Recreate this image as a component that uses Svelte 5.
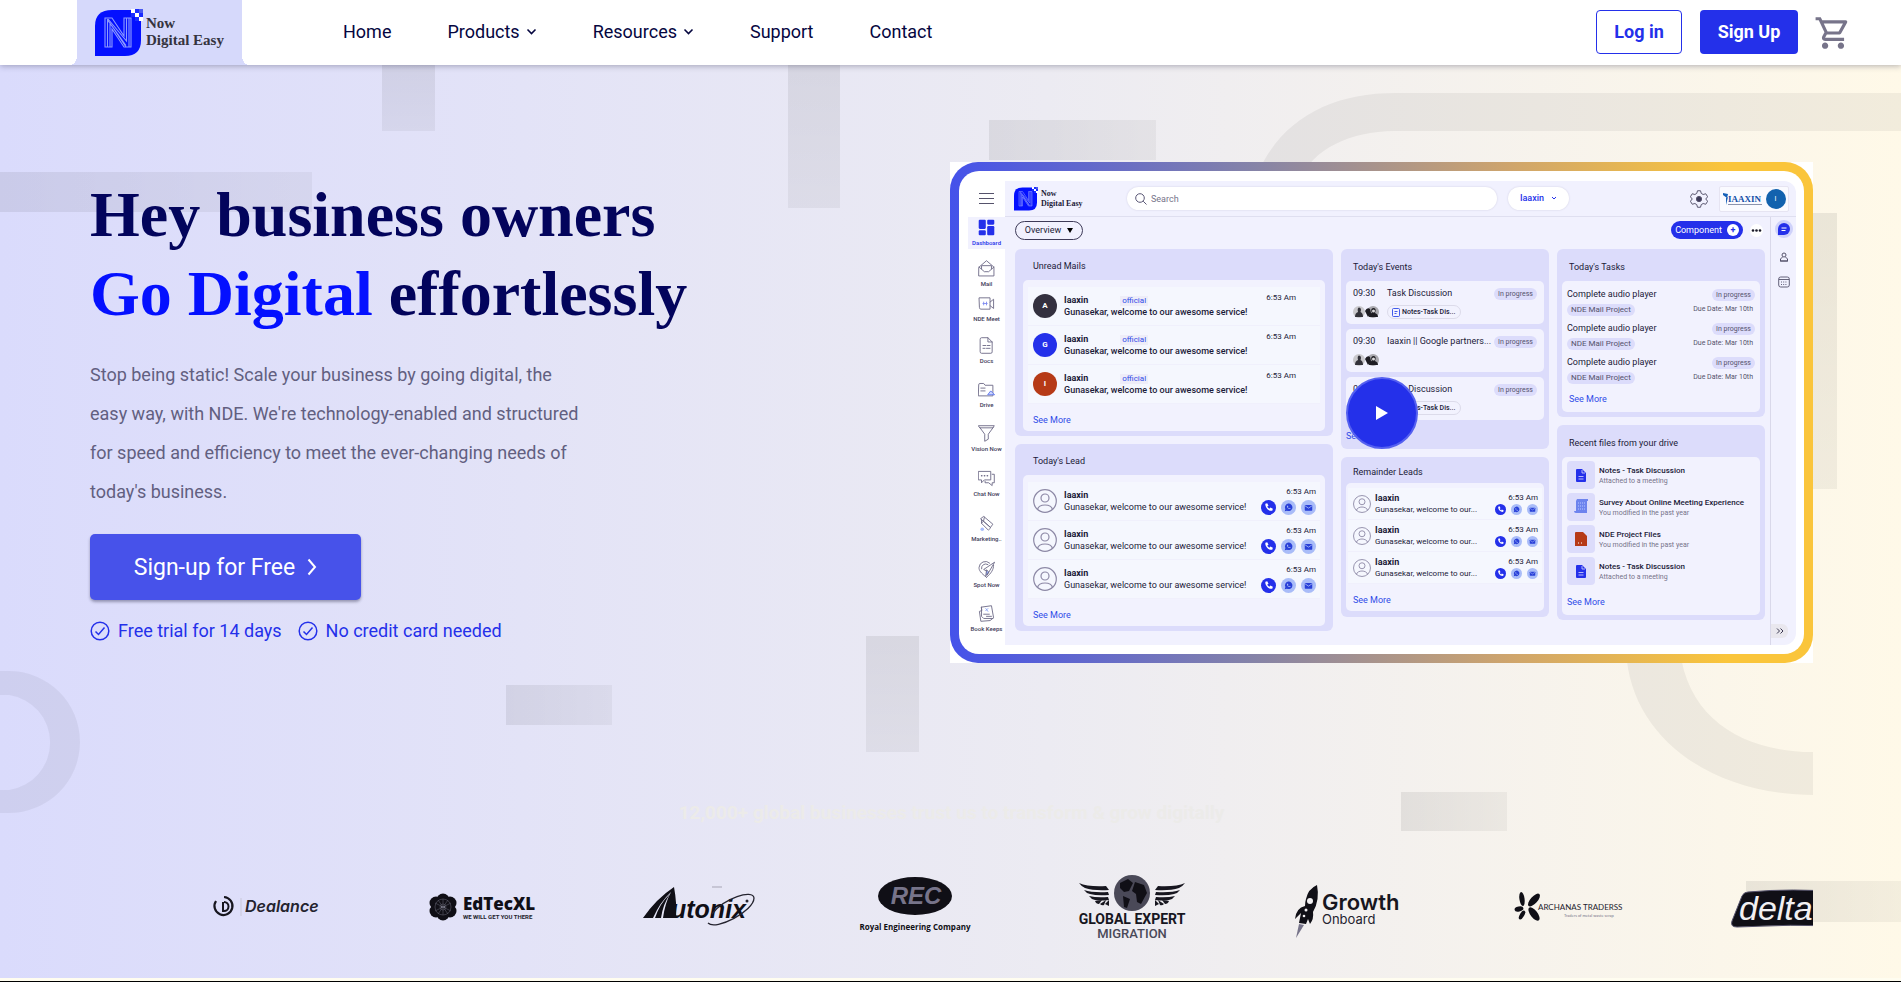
<script>
  const menu = [
    { label: 'Home' },
    { label: 'Products', drop: true },
    { label: 'Resources', drop: true },
    { label: 'Support' },
    { label: 'Contact' }
  ];
  const side = [
    { label: 'Dashboard', icon: 'dash', h: 32 },
    { label: 'Mail', icon: 'mail', h: 41 },
    { label: 'NDE Meet', icon: 'meet', h: 35 },
    { label: 'Docs', icon: 'docs', h: 42 },
    { label: 'Drive', icon: 'drive', h: 44 },
    { label: 'Vision Now', icon: 'funnel', h: 44 },
    { label: 'Chat Now', icon: 'chat', h: 45 },
    { label: 'Marketing..', icon: 'market', h: 45 },
    { label: 'Spot Now', icon: 'spot', h: 46 },
    { label: 'Book Keeps', icon: 'book', h: 44 }
  ];
  const mails = [
    { letter: 'A', color: '#33303f' },
    { letter: 'G', color: '#2430ea' },
    { letter: 'I', color: '#b63a17' }
  ];
  const events = [
    { title: 'Task Discussion', note: true },
    { title: 'Iaaxin || Google partners...', note: false },
    { title: 'Task Discussion', note: true }
  ];
  const files = [
    { name: 'Notes - Task Discussion', info: 'Attached to a meeting', kind: 'doc' },
    { name: 'Survey About Online Meeting Experience', info: 'You modified in the past year', kind: 'survey' },
    { name: 'NDE Project Files', info: 'You modified in the past year', kind: 'pdf' },
    { name: 'Notes - Task Discussion', info: 'Attached to a meeting', kind: 'doc' }
  ];
  const three = [0, 1, 2];
</script>

{#snippet brandMark(size)}
  <svg width={size} height={size} viewBox="0 0 48 48" aria-hidden="true">
    <path d="M0 47V17Q0 1 17 1H46V31Q46 47 30 47Z" fill="#0410ff" />
    <g fill="none" stroke="#8f9bff" stroke-width="1.1">
      <path d="M10 38V9H17L29 27V9H36V38H29L17 20V38Z" />
      <path d="M12.500 38V11L31 36.500M15 38V15M31.500 9V32L13 10M34 9V38M17 17L31 38" />
    </g>
    <path d="M36 0h4v4h-4zM40 4h4v4h-4zM44 8h4v4h-4z" fill="#fff" />
    <path d="M40 0h4v4h-4zM44 4h4v4h-4zM36 4h4v4h-4zM40 8h4v4h-4z" fill="#1a2cff" />
    <path d="M44 0h4v4h-4z" fill="#4a5af0" />
  </svg>
{/snippet}

{#snippet person(size)}
  <svg width={size} height={size} viewBox="0 0 24 24" fill="none" stroke="#8d89a6" stroke-width="1.200" aria-hidden="true">
    <circle cx="12" cy="12" r="11.300" /><circle cx="12" cy="9" r="4" /><path d="M4.500 20.500C6 14.500 18 14.500 19.500 20.500" />
  </svg>
{/snippet}

{#snippet contactIcons(size)}
  <span class="contacts" class:tight={size < 12}>
    <svg width={size} height={size} viewBox="0 0 24 24" aria-hidden="true">
      <circle cx="12" cy="12" r="12" fill="#2430ea" />
      <path d="M7 6l3-1 2 4-2 1.500c.8 1.800 1.800 2.800 3.500 3.500L15 12l4 2-1 3c-5 2-12-5-11-11z" fill="#fff" />
    </svg>
    <svg width={size} height={size} viewBox="0 0 24 24" aria-hidden="true">
      <circle cx="12" cy="12" r="12" fill="#a9bcf8" />
      <path d="M6 18l1-3.500a6 6 0 1 1 2.500 2.500z" fill="#2940d8" />
      <path d="M9.500 9l1.500 0 .7 1.500-.7 1c.6 1 1.200 1.500 2 1.900l1-.7 1.500.9c-1 2.500-6.500-.500-6-4.600z" fill="#a9bcf8" />
    </svg>
    <svg width={size} height={size} viewBox="0 0 24 24" aria-hidden="true">
      <circle cx="12" cy="12" r="12" fill="#a9bcf8" />
      <rect x="6" y="8" width="12" height="9" rx="1" fill="#2940d8" /><path d="M6 9l6 4 6-4" stroke="#a9bcf8" fill="none" stroke-width="1.300" />
    </svg>
  </span>
{/snippet}

{#snippet sideIcon(kind)}
  <svg width="17" height="17" viewBox="0 0 24 24" fill="none" stroke="#6f6c88" stroke-width="1.300" stroke-linejoin="round" stroke-linecap="round" aria-hidden="true">
    {#if kind === 'dash'}
      <g fill="#2430ea" stroke="none"><rect x="1" y="1" width="10" height="13" rx="1.500" /><rect x="1" y="16" width="10" height="7" rx="1.500" /><rect x="13" y="1" width="10" height="7" rx="1.500" /><rect x="13" y="10" width="10" height="13" rx="1.500" /></g>
    {:else if kind === 'mail'}
      <path d="M1.500 10L12 1l10.500 9v12.500h-21zM1.500 10L9 16.500h6L22.500 10M5 12.500V8h14v4.500" />
    {:else if kind === 'meet'}
      <path d="M2 4h15v16H4q-2 0-2-2zM17 10l5-4v13l-5-4" /><path d="M7 12h6M8 10v4M12 10v4" stroke="#7f8cf0" />
    {:else if kind === 'docs'}
      <path d="M3 3q0-2 2-2h9l6 6v14q0 2-2 2H5q-2 0-2-2zM14 1v6h6M7 12h4M13 12h4M7 16h3M12 16h5" />
    {:else if kind === 'drive'}
      <path d="M1 5q0-1.500 1.500-1.500H8L10 6h11v15H1zM4 10h6M4 14h6" /><path d="M14 19l4-5 5 5z" stroke="#5f78f0" fill="#cdd6ff" />
    {:else if kind === 'funnel'}
      <path d="M1 1h22l-2 3H3zM2.500 3.500L9.500 13v10l5-3v-7l7-9.500" />
    {:else if kind === 'chat'}
      <path d="M1 2h17v12H9l-4 4v-4H1zM20 6h3v12h-3v4l-5-4h-5v-2" /><path d="M5 8h.5M9 8h.5M13 8h.5" stroke-width="2" />
    {:else if kind === 'market'}
      <path d="M4 5l4-3 13 11-3 4zM9 3L8 8M5 11l3-2 10 9-3 3zM5 11v-5" /><circle cx="6" cy="20" r="2.500" fill="#a9bcf8" stroke="none" />
    {:else if kind === 'spot'}
      <path d="M12 23C4 17 1 13 1.500 9a9 9 0 0 1 15-6M22 6c0 6-3 11-10 17M5 11a6 6 0 0 1 9-6M23 2L8 12l4 2 1 5z" /><path d="M12 13l-1 8 4-5z" fill="#8ea6f8" />
    {:else}
      <path d="M5 3l14-2 3 17-5 4-13 1-2-14 3-1zM5 3v13l3 3h13M8 13h8M12 16h7" /><path d="M11 5l3 4M14 5l-3 3" stroke="#8ea6f8" />
    {/if}
  </svg>
{/snippet}

{#snippet wing()}
  <path d="M57 16Q66 20 84 19L87 23Q72 24 63 21Q60 20 57 16Z" />
  <path d="M62 23Q71 26 86 25L87 28Q75 29 68 27Q64 26 62 23Z" />
  <path d="M67 29Q75 31 86 30L87 33Q78 34 73 33Q69 32 67 29Z" />
  <path d="M73 34L80 33 77 37Q74 37 73 34ZM78 37L84 33 82 38Q80 39 78 37ZM83 37L87 33 87 39Z" />
{/snippet}

<header>
  <a class="brand" href="#home">
    {@render brandMark(48)}
    <span>Now<br />Digital Easy</span>
  </a>
  <nav aria-label="Main">
    {#each menu as item}
      {#if item.drop}
        <button class="nav-item" type="button">{item.label}
          <svg width="11" height="8" viewBox="0 0 11 8" fill="none" stroke="#05063f" stroke-width="1.600" aria-hidden="true"><path d="M1.500 1.500l4 4 4-4" /></svg>
        </button>
      {:else}
        <a class="nav-item" href="#{item.label.toLowerCase()}">{item.label}</a>
      {/if}
    {/each}
  </nav>
  <div class="account">
    <button class="login" type="button">Log in</button>
    <button class="signup" type="button">Sign Up</button>
    <a class="cart" href="#cart" aria-label="Cart">
      <svg width="38" height="38" viewBox="0 0 24 24" fill="#77748a" aria-hidden="true"><path d="M15.550 13c.750 0 1.410-.410 1.750-1.030l3.580-6.490A.996.996 0 0 0 20.010 4H5.210l-.940-2H1v2h2l3.600 7.590-1.350 2.440C4.520 15.370 5.480 17 7 17h12v-2H7l1.100-2h7.450zM6.160 6h12.150l-2.760 5H8.530L6.160 6zM7 18c-1.100 0-1.990.9-1.990 2S5.900 22 7 22s2-.9 2-2-.9-2-2-2zm10 0c-1.100 0-1.990.9-1.990 2s.890 2 1.990 2 2-.9 2-2-.9-2-2-2z" /></svg>
    </a>
  </div>
</header>

<main>
  <svg class="decor" viewBox="0 65 1901 913" preserveAspectRatio="none" aria-hidden="true">
    <defs>
      <linearGradient id="tall" x1="0" y1="0" x2="0" y2="1"><stop offset="0" stop-opacity=".075" /><stop offset="1" stop-opacity=".05" /></linearGradient>
      <linearGradient id="wide" x1="0" y1="0" x2="1" y2="0"><stop offset="0" stop-opacity=".075" /><stop offset="1" stop-opacity=".045" /></linearGradient>
    </defs>
    <g fill="url(#tall)">
      <rect x="382" y="65" width="53" height="66" /><rect x="788" y="65" width="52" height="143" />
      <rect x="866" y="636" width="53" height="116" /><rect x="1785" y="213" width="52" height="276" />
    </g>
    <g fill="url(#wide)">
      <rect x="0" y="172" width="312" height="40" /><rect x="989" y="120" width="167" height="40" />
      <rect x="506" y="685" width="106" height="40" /><rect x="1401" y="792" width="106" height="39" /><rect x="1746" y="881" width="155" height="41" />
    </g>
    <path d="M1901 93H1395C1330 93 1278 120 1255 180H1300C1312 150 1350 131 1395 131H1901Z" fill-opacity=".05" />
    <path d="M1626 650C1630 740 1715 795 1813 795V752C1745 752 1688 720 1680 650Z" fill-opacity=".05" />
    <path d="M0 671H9A71 71 0 0 1 9 813H0V790H9A48 48 0 0 0 9 695H0Z" fill-opacity=".05" />
  </svg>

  <section class="hero">
    <div class="pitch">
      <h1>Hey business owners<br /><em>Go Digital</em> effortlessly</h1>
      <p>Stop being static! Scale your business by going digital, the easy way, with NDE. We're technology-enabled and structured for speed and efficiency to meet the ever-changing needs of today's business.</p>
      <button class="cta" type="button">Sign-up for Free
        <svg width="10" height="18" viewBox="0 0 10 18" fill="none" stroke="#fff" stroke-width="2" aria-hidden="true"><path d="M1.500 1.500L8 9l-6.500 7.500" /></svg>
      </button>
      <ul class="perks">
        {#each ['Free trial for 14 days', 'No credit card needed'] as perk}
          <li>
            <svg width="20" height="20" viewBox="0 0 20 20" fill="none" stroke="#2430ea" stroke-width="1.500" aria-hidden="true"><circle cx="10" cy="10" r="8.800" /><path d="M5.500 10.500l3 3 6-7" /></svg>
            {perk}
          </li>
        {/each}
      </ul>
    </div>

    <div class="frame">
      <div class="ring">
        <div class="screen">
          <aside>
            <div class="burger"><i></i><i></i><i></i></div>
            {#each side as item, i}
              <div class="side-item" class:active={i === 0} style="height:{item.h}px">
                {@render sideIcon(item.icon)}
                <span>{item.label}</span>
              </div>
            {/each}
          </aside>

          <div class="app">
            <div class="topbar">
              <div class="mini-brand">{@render brandMark(24)}<span>Now<br />Digital Easy</span></div>
              <label class="search">
                <svg width="12" height="12" viewBox="0 0 12 12" fill="none" stroke="#5a5775" aria-hidden="true"><circle cx="5" cy="5" r="4.300" /><path d="M8.200 8.200L11.500 11.500" /></svg>
                <input type="text" placeholder="Search" aria-label="Search" />
              </label>
              <button class="org" type="button">Iaaxin
                <svg width="6" height="5" viewBox="0 0 6 5" fill="none" stroke="#2430ea" aria-hidden="true"><path d="M1 1l2 2 2-2" /></svg>
              </button>
              <svg class="gear" width="18" height="18" viewBox="0 0 24 24" fill="none" stroke="#55526b" stroke-width="1.300" stroke-linejoin="round" aria-hidden="true"><path d="M10 1h4l1 3.500 2.500 1.500L21 5l2.500 4-2.500 3 2.500 3L21 19l-3.500-1L15 19.500 14 23h-4l-1-3.500L6.500 18 3 19 .5 15 3 12 .5 9 3 5l3.500 1L9 4.500z" /><circle cx="12" cy="12" r="3.500" fill="#3d3a58" /></svg>
              <div class="tenant">
                <svg width="41" height="16" viewBox="0 0 41 16" aria-hidden="true">
                  <path d="M0 2l5 1-1 4-4-3zM3 7l2-1-2 8z" fill="#1560b8" />
                  <text x="5" y="11" font-family="Liberation Serif, serif" font-size="9" font-weight="700" fill="#1450a8">IAAXIN</text>
                  <path d="M5 13.500h34" stroke="#8b93ad" />
                </svg>
                <b>I</b>
              </div>
            </div>

            <div class="below">
              <div class="work">
                <div class="toolbar">
                  <button class="overview" type="button">Overview <svg width="6" height="5" viewBox="0 0 6 5" aria-hidden="true"><path d="M0 0h6L3 5z" /></svg></button>
                  <button class="component" type="button">Component <i>+</i></button>
                  <svg class="dots" width="13" height="13" viewBox="0 0 13 13" aria-hidden="true"><circle cx="6.500" cy="6.500" r="6.500" fill="#fff" /><g fill="#1b1a28"><circle cx="3" cy="6.500" r="1.300" /><circle cx="6.500" cy="6.500" r="1.300" /><circle cx="10" cy="6.500" r="1.300" /></g></svg>
                </div>

                <div class="columns">
                  <div class="col">
                    <section class="card">
                      <h2>Unread Mails</h2>
                      <div class="inner">
                        {#each mails as mail}
                          <div class="mail">
                            <b class="avatar" style="background:{mail.color}">{mail.letter}</b>
                            <div class="grow">
                              <div class="line"><strong>Iaaxin</strong><span class="tag">official</span></div>
                              <div class="strong">Gunasekar, welcome to our awesome service!</div>
                            </div>
                            <time>6:53 Am</time>
                          </div>
                        {/each}
                        <a class="more" href="#mails">See More</a>
                      </div>
                    </section>
                    <section class="card">
                      <h2>Today's Lead</h2>
                      <div class="inner">
                        {#each three as _}
                          <div class="mail lead">
                            {@render person(24)}
                            <div class="grow">
                              <div class="line"><strong>Iaaxin</strong></div>
                              <div>Gunasekar, welcome to our awesome service!</div>
                            </div>
                            <div class="reach"><time>6:53 Am</time>{@render contactIcons(15)}</div>
                          </div>
                        {/each}
                        <a class="more" href="#leads">See More</a>
                      </div>
                    </section>
                  </div>

                  <div class="col">
                    <section class="card narrow events">
                      <h2>Today's Events</h2>
                      {#each events as event}
                        <div class="event">
                          <div class="split"><span class="hour">09:30</span><span class="grow">{event.title}</span><span class="chip">In progress</span></div>
                          <div class="split">
                            <svg class="faces" width="27" height="12" viewBox="0 0 27 12" aria-hidden="true">
                              <circle cx="6" cy="6" r="6" fill="#c9c8cc" /><path d="M2 11q0-4 3-5-1-4 1-4.500Q9 2 7.500 6 10 7 10 11z" fill="#33323a" />
                              <circle cx="20" cy="6" r="6" fill="#a9a8ae" /><path d="M12 5q2-4 5-2l1 4-3 4zM16 11q0-4 3-4-2-4 1-5 4 0 2 5 3 1 3 4z" fill="#1d1c22" /><circle cx="20.500" cy="5" r="1.500" fill="#dcdadc" />
                            </svg>
                            {#if event.note}
                              <span class="note"><svg width="8" height="9" viewBox="0 0 8 9" fill="none" stroke="#2f4be8" stroke-width=".9" aria-hidden="true"><rect x=".5" y=".5" width="7" height="8" rx="1" /><path d="M2.500 3.500h3M2.500 5.500h2" /></svg>Notes-Task Dis...</span>
                            {/if}
                          </div>
                        </div>
                      {/each}
                      <a class="more" href="#events">See More</a>
                    </section>
                    <section class="card narrow remain">
                      <h2>Remainder Leads</h2>
                      <div class="inner">
                        {#each three as _}
                          <div class="mail small">
                            {@render person(18)}
                            <div class="grow">
                              <div><strong>Iaaxin</strong></div>
                              <div>Gunasekar, welcome to our...</div>
                            </div>
                            <div class="reach"><time>6:53 Am</time>{@render contactIcons(11)}</div>
                          </div>
                        {/each}
                        <a class="more" href="#remainder">See More</a>
                      </div>
                    </section>
                  </div>

                  <div class="col">
                    <section class="card narrow tasks">
                      <h2>Today's Tasks</h2>
                      <div class="inner">
                        {#each three as _}
                          <div class="task">
                            <div class="split"><span class="grow">Complete audio player</span><span class="chip">In progress</span></div>
                            <div class="split"><span class="chip project">NDE Mail Project</span><span class="due">Due Date: Mar 10th</span></div>
                          </div>
                        {/each}
                        <a class="more" href="#tasks">See More</a>
                      </div>
                    </section>
                    <section class="card narrow files">
                      <h2>Recent files from your drive</h2>
                      <div class="inner">
                        {#each files as file}
                          <div class="file">
                            <span class="tile">
                              <svg width="14" height="16" viewBox="0 0 14 16" aria-hidden="true">
                                {#if file.kind === 'survey'}
                                  <path d="M3 0h11v2h-1v12H2q-2 0-2-2h2V2z" fill="#6d83ee" /><path d="M4 4h7M4 7h7M4 10h7" stroke="#b9c6ff" stroke-dasharray="1 1" />
                                {:else if file.kind === 'pdf'}
                                  <path d="M2 1h7l4 4v10H1V2q0-1 1-1z" fill="#b63a17" /><path d="M4 12h1M7 12h1" stroke="#fff" />
                                {:else}
                                  <path d="M3 2h5l4 4v8q0 1-1 1H3q-1 0-1-1V3q0-1 1-1z" fill="#2430ea" />
                                  <path d="M4.500 9.500h5M4.500 12h5M8 3v3h3" stroke="#dcdcfb" fill="none" stroke-width=".8" />
                                {/if}
                              </svg>
                            </span>
                            <div><div class="fname">{file.name}</div><div class="finfo">{file.info}</div></div>
                          </div>
                        {/each}
                        <a class="more" href="#files">See More</a>
                      </div>
                    </section>
                  </div>
                </div>
              </div>

              <div class="rail">
                <svg width="18" height="18" viewBox="0 0 18 18" aria-hidden="true"><circle cx="9" cy="9" r="9" fill="#cfd2fa" /><path d="M3 15V9a6 6 0 1 1 6 6z" fill="#2430ea" /><path d="M6.500 8h5M6.500 10.500h4" stroke="#fff" /></svg>
                <svg width="10" height="10" viewBox="0 0 10 10" fill="none" stroke="#55526b" aria-hidden="true"><circle cx="5" cy="3" r="2" /><path d="M3.500 5L1.500 7v2h7V7l-2-2M1 9h8" /></svg>
                <svg width="12" height="12" viewBox="0 0 12 12" fill="none" stroke="#55526b" stroke-width=".9" aria-hidden="true"><rect x=".7" y="1" width="10.600" height="10" rx="2" /><path d="M1 3.500h10" /><path d="M3 6h6M3 8.500h6" stroke-dasharray="1 1.200" /></svg>
                <span class="expand"><svg width="8" height="6" viewBox="0 0 8 6" fill="none" stroke="#3b3850" aria-hidden="true"><path d="M1 .5L3.500 3 1 5.500M4.500 .5L7 3 4.500 5.500" /></svg></span>
              </div>
            </div>
          </div>
        </div>
      </div>
      <button class="play" type="button" aria-label="Play video">
        <svg width="12" height="14" viewBox="0 0 12 14" fill="#fff" aria-hidden="true"><path d="M0 0l12 7-12 7z" /></svg>
      </button>
    </div>
  </section>

  <p class="trust">12,000+ global businesses trust us to transform &amp; grow digitally</p>

  <div class="partners">
    <svg viewBox="0 0 216 80">
      <g fill="none" stroke="#17161f" stroke-width="2.200"><path d="M58 34A9 9 0 1 0 66 30" /></g>
      <path d="M65 35v9h1a4.500 4.500 0 0 0 0-9" fill="none" stroke="#17161f" stroke-width="2" /><path d="M83 31v18" stroke="#c9c8da" />
      <text x="87" y="45" font-family="Inter, sans-serif" font-size="16" font-weight="600" font-style="italic" fill="#24232e">Dealance</text>
    </svg>
    <svg viewBox="0 0 216 80">
      <g fill="#100f16"><circle cx="69" cy="33" r="6.500" /><circle cx="62" cy="36" r="6.500" /><circle cx="62" cy="44" r="6.500" /><circle cx="76" cy="36" r="6.500" /><circle cx="76" cy="44" r="6.500" /><circle cx="69" cy="47" r="6.500" /></g>
      <g fill="none" stroke="#5b5a68" stroke-width=".6"><circle cx="69" cy="40" r="8" /><circle cx="69" cy="40" r="3" /><path d="M61 36l16 8M61 44l16-8M69 32v16M64 33l10 14M74 33L64 47" /></g>
      <text x="89" y="43" font-family="Open Sans, sans-serif" font-size="17" font-weight="800" fill="#100f16">EdTecXL</text>
      <text x="89" y="52" font-family="Roboto, sans-serif" font-size="6" font-weight="700" fill="#24232e">WE WILL GET YOU THERE</text>
    </svg>
    <svg viewBox="0 0 216 80">
      <path d="M53 51Q66 32 84 20Q87 36 86 51H73Q75 36 81 25Q70 35 63 51Z" fill="#100f16" /><path d="M65 51Q70 36 80 27Q73 37 71 51Z" fill="#100f16" />
      <text x="81" y="51" font-family="Liberation Sans, sans-serif" font-size="25" font-weight="700" font-style="italic" fill="#100f16">utonix</text>
      <path d="M118 56C126 64 164 44 164 31 163 22 134 31 122 47" fill="none" stroke="#24232e" stroke-width="1.300" /><circle cx="157" cy="34" r="1.500" fill="#24232e" /><path d="M122 20h10" stroke="#a7a5b5" />
    </svg>
    <svg viewBox="0 0 216 80">
      <ellipse cx="109" cy="29" rx="37" ry="19" fill="#100f16" />
      <text x="110" y="37" text-anchor="middle" font-family="Liberation Sans, sans-serif" font-size="24" font-weight="700" font-style="italic" fill="#77748a">REC</text>
      <text x="109" y="63" text-anchor="middle" font-family="Open Sans, sans-serif" font-size="8" font-weight="700" fill="#100f16">Royal Engineering Company</text>
    </svg>
    <svg viewBox="0 0 216 80">
      <g fill="#17161f">{@render wing()}</g>
      <g fill="#17161f" transform="translate(220 0) scale(-1 1)">{@render wing()}</g>
      <circle cx="110" cy="26" r="18" fill="#4a4958" /><path d="M98 16l8-4 5 4-4 8-5 1-4-4zM101 29l7 3-3 9-3-1zM113 15l9 3 3 8-6 11-4-2-1-8-4-3z" fill="#100f16" />
      <text x="110" y="57" text-anchor="middle" font-family="Roboto, sans-serif" font-size="14" font-weight="700" fill="#17161f">GLOBAL EXPERT</text>
      <text x="110" y="71" text-anchor="middle" font-family="Roboto, sans-serif" font-size="13" font-weight="500" fill="#4a4958">MIGRATION</text>
    </svg>
    <svg viewBox="0 0 216 80">
      <path d="M79 18q-9 4-11 14-1 3-1 7-9 2-10 13l6-6-2 10 7 1 2-5 2 5q4-5 3-12 7-12 4-27z" fill="#100f16" /><circle cx="72" cy="34" r="3" fill="#f2f0f2" /><circle cx="68" cy="43" r="1.500" fill="#f2f0f2" /><circle cx="66" cy="49" r="1.300" fill="#f2f0f2" /><path d="M61 57l5 1-8 13z" fill="#77748a" />
      <text x="84" y="43" font-family="Inter, sans-serif" font-size="22" font-weight="600" fill="#17161f">Growth</text>
      <text x="84" y="57" font-family="Inter, sans-serif" font-size="13" fill="#24232e">Onboard</text>
    </svg>
    <svg viewBox="-6 0 216 80">
      <g fill="#100f16">
        <ellipse cx="62" cy="32" rx="2.600" ry="7" transform="rotate(-8 62 32)" /><ellipse cx="74" cy="33" rx="3.500" ry="8" transform="rotate(42 74 33)" /><ellipse cx="74" cy="47" rx="3.500" ry="8" transform="rotate(-38 74 47)" /><ellipse cx="59" cy="42" rx="2.500" ry="4.500" transform="rotate(78 59 42)" /><ellipse cx="62" cy="48" rx="2.200" ry="5" transform="rotate(30 62 48)" />
      </g>
      <text x="78" y="43" font-family="Lato, sans-serif" font-size="8" fill="#24232e">ARCHANAS TRADERSS</text>
      <text x="104" y="50" font-family="Lato, sans-serif" font-size="4" fill="#77748a">Traders of metal waste scrap</text>
    </svg>
    <svg viewBox="-7 0 216 80">
      <path d="M71 25Q114 21 166 25V59Q114 57 60 60 53 60 55 54L65 29Q67 25 71 25Z" fill="#100f16" stroke="#55526b" />
      <text x="62" y="53" font-family="Liberation Sans, sans-serif" font-size="34" font-style="italic" fill="#f2f0f2">delta</text>
    </svg>
  </div>
</main>
<div class="next"></div>

<style>
  :global(body) { background: #fffdf0; font-family: Roboto, sans-serif; color: #05063f; }
  :global(*) { box-sizing: border-box; }
  button { font: inherit; border: 0; background: none; padding: 0; color: inherit; cursor: pointer; }
  a { color: inherit; text-decoration: none; }
  svg { display: block; flex: none; }
  i { font-style: normal; }

  header { position: relative; z-index: 2; display: flex; align-items: stretch; height: 65px; padding: 0 49px 0 77px; background: #fff; box-shadow: 0 1px 6px rgba(40, 40, 70, .35); }
  .brand { position: relative; display: flex; gap: 3px; width: 165px; padding: 9px 0 0 18px; background: #d6d9fb; font: 700 15px/17px "Liberation Serif", serif; color: #35343f; }
  .brand span { padding-top: 6px; }
  .brand::before, .brand::after { content: ""; position: absolute; bottom: 0; width: 7px; height: 9px; }
  .brand::before { right: 100%; background: radial-gradient(ellipse 7px 9px at 0 0, #fff 97%, #d6d9fb); }
  .brand::after { left: 100%; background: radial-gradient(ellipse 7px 9px at 100% 0, #fff 97%, #d6d9fb); }
  nav { display: flex; align-items: center; gap: 56px; margin-left: 101px; padding-bottom: 2px; }
  .nav-item { display: flex; align-items: center; gap: 6px; font-size: 18px; line-height: 24px; }
  .account { display: flex; align-items: center; gap: 18px; margin-left: auto; padding-bottom: 2px; font-size: 18px; font-weight: 700; }
  .login { width: 86px; height: 44px; border: 1px solid #2430ea; border-radius: 4px; color: #2430ea; }
  .signup { width: 98px; height: 44px; border-radius: 4px; background: #2430ea; color: #fff; }
  .cart { margin-left: -2px; padding-top: 2px; }

  main { position: relative; padding: 97px 88px 19px 90px; background: linear-gradient(90deg, #dadbfc, #ecebf2 55%, #fff9e8); }
  .decor { position: absolute; inset: 0; width: 100%; height: 100%; }
  .hero { position: relative; display: grid; grid-template-columns: minmax(0, 860fr) minmax(0, 863fr); }
  .pitch { padding-top: 13px; }
  h1 { margin: 0; font: 700 64px/79px "Liberation Serif", serif; color: #03045c; }
  h1 em { font-style: normal; color: #0410ff; }
  .pitch p { max-width: 495px; margin: 22px 0 23px; font-size: 18px; line-height: 39px; color: #625f80; }
  .cta { display: flex; align-items: center; justify-content: center; gap: 12px; width: 271px; height: 66px; border-radius: 5px; background: #4752ea; color: #fff; font-size: 23px; box-shadow: 0 2px 3px rgba(40, 40, 70, .4); }
  .perks { display: flex; gap: 16px; margin: 19px 0 0; padding: 0; list-style: none; font-size: 18px; line-height: 24px; color: #2430ea; }
  .perks li { display: flex; align-items: center; gap: 8px; }

  .frame { position: relative; background: #fff; font-size: 9px; line-height: 11px; color: #1b1a38; }
  .ring { padding: 9px; border-radius: 28px; background: linear-gradient(90deg, #4552ea, #8583a8 35%, #cfa56c 65%, #fac53b 90%); }
  .screen { display: grid; grid-template-columns: 37px minmax(0, 1fr); padding: 10px 8px 9px 9px; border-radius: 20px; background: #fff; }
  .burger { display: flex; flex-direction: column; gap: 4px; height: 36px; padding: 12px 11px 0; }
  .burger i { height: 1px; background: #55526b; }
  .side-item { display: flex; flex-direction: column; align-items: center; justify-content: flex-end; gap: 3px; padding-bottom: 3px; font-size: 6px; font-weight: 500; line-height: 7px; white-space: nowrap; color: #3d3a58; }
  .side-item.active { background: #f1f1fe; color: #2430ea; }
  .app { background: #f1f1fe; border-radius: 0 12px 12px 0; }
  .topbar { display: flex; align-items: center; height: 36px; padding: 0 7px 0 9px; border-bottom: 1px solid #dfdff0; }
  .mini-brand { display: flex; gap: 3px; width: 113px; font: 700 8px/10px "Liberation Serif", serif; }
  .mini-brand span { padding-top: 2px; }
  .search { display: flex; flex: 1; align-items: center; gap: 4px; height: 23px; padding-left: 8px; border-radius: 12px; background: #fff; box-shadow: 0 0 2px #cfcde0; }
  .search input { width: 80%; padding: 0; border: 0; outline: 0; background: none; font: 9px Roboto, sans-serif; }
  .search input::placeholder { color: #77748a; }
  .org { display: flex; align-items: center; justify-content: center; gap: 7px; width: 61px; height: 23px; margin: 0 121px 0 11px; border-radius: 12px; background: #fff; box-shadow: 0 0 2px #cfcde0; font-weight: 500; color: #2430ea; }
  .tenant { display: flex; align-items: center; justify-content: center; gap: 2px; width: 70px; height: 26px; margin-left: 11px; border: 1px solid #e6e4f2; border-radius: 2px; background: #fafaff; }
  .tenant b { width: 20px; height: 20px; border-radius: 50%; background: #1262ae; color: #fff; font-size: 7px; font-weight: 400; line-height: 20px; text-align: center; }
  .below { display: flex; height: 428px; }
  .work { flex: 1; min-width: 0; padding: 4px 5px 0 10px; }
  .toolbar { display: flex; align-items: center; gap: 7px; height: 18px; margin-bottom: 10px; }
  .overview { display: flex; align-items: center; justify-content: center; gap: 6px; width: 68px; height: 19px; border: 1px solid #3d3a58; border-radius: 10px; }
  .component { display: flex; align-items: center; justify-content: center; gap: 5px; width: 72px; height: 18px; margin-left: auto; border-radius: 9px; background: #2430ea; color: #fff; }
  .component i { width: 12px; height: 12px; border-radius: 50%; background: #fff; color: #2430ea; font-weight: 700; line-height: 12px; }
  .dots { margin-right: 2px; }
  .columns { display: grid; grid-template-columns: minmax(0, 318fr) minmax(0, 208fr) minmax(0, 208fr); gap: 8px; white-space: nowrap; }
  .col { display: flex; flex-direction: column; gap: 8px; }
  .card { padding: 0 8px 5px; border-radius: 6px; background: #dcdcfb; }
  .card h2 { height: 31px; margin: 0; padding-left: 10px; font-size: 9px; font-weight: 400; line-height: 34px; }
  .inner { padding: 7px 5px 0; border-radius: 5px; background: #f2f2fe; }
  .mail { display: flex; align-items: center; gap: 7px; height: 39px; padding: 0 24px 0 5px; border-bottom: 1px solid #f0f0fc; background: #f5f7fe; }
  .mail.lead { padding-right: 4px; }
  .avatar { width: 24px; height: 24px; border-radius: 50%; color: #fff; font-size: 8px; line-height: 24px; text-align: center; }
  .grow { flex: 1; min-width: 0; }
  .line { display: flex; align-items: center; height: 13px; }
  .tag { margin-left: 32px; padding: 0 2px; background: #eeedf8; font-size: 8px; line-height: 10px; color: #2f4be8; }
  .strong { font-weight: 500; }
  strong { font-size: 9px; font-weight: 700; }
  time { font-size: 8px; line-height: 10px; }
  .mail > time { align-self: flex-start; padding-top: 6px; }
  .reach { display: flex; flex-direction: column; align-items: flex-end; gap: 3px; }
  .contacts { display: flex; gap: 5px; }
  .more { display: block; height: 27px; padding: 10px 0 0 5px; line-height: 12px; color: #2f4be8; }
  .narrow { padding: 0 5px; }
  .narrow h2 { padding-left: 7px; height: 32px; line-height: 36px; }
  .event { height: 43px; margin-bottom: 5px; padding: 6px 7px 0; border-radius: 5px; background: #f2f2fe; }
  .split { display: flex; align-items: center; height: 13px; }
  .event .split + .split { height: 14px; margin-top: 5px; gap: 7px; }
  .hour { width: 34px; }
  .chip { padding: 0 4px; border-radius: 6px; background: #dcdcfb; font-size: 7px; line-height: 12px; color: #55526b; }
  .chip.project { font-size: 8px; }
  .note { display: flex; align-items: center; gap: 2px; height: 14px; padding: 0 5px 0 4px; border: 1px solid #dcdbea; border-radius: 7px; font-size: 7px; font-weight: 500; }
  .events .more { height: 24px; padding: 5px 0 0; }
  .remain { padding-bottom: 6px; }
  .remain h2 { height: 26px; line-height: 30px; }
  .remain .inner { padding: 5px 2px 0; }
  .mail.small { height: 32px; gap: 4px; padding: 0 4px 0 5px; font-size: 8px; line-height: 11px; }
  .tight { gap: 5px; }
  .small .reach { gap: 1px; }
  .tasks, .files { padding-bottom: 5px; }
  .tasks .inner, .files .inner { padding: 4px 5px 0; }
  .task { height: 34px; padding-top: 3px; }
  .task .split + .split { margin-top: 2px; justify-content: space-between; }
  .due { padding-right: 2px; font-size: 7px; color: #55526b; }
  .tasks .more { height: 25px; padding-top: 6px; padding-left: 2px; }
  .file { display: flex; gap: 4px; height: 32px; }
  .tile { display: grid; place-items: center; flex: none; width: 28px; height: 28px; border-radius: 4px; background: #dcdcfb; }
  .fname { padding-top: 4px; font-size: 8px; font-weight: 500; line-height: 11px; }
  .finfo { font-size: 7px; line-height: 11px; color: #77748a; }
  .files .more { height: 26px; padding: 7px 0 0; }
  .rail { display: flex; flex-direction: column; align-items: center; width: 26px; padding-top: 3px; border-left: 1px solid #d9d8ea; gap: 14px; }
  .expand { display: grid; place-items: center; align-self: flex-start; width: 17px; height: 14px; margin: auto 0 7px; border-radius: 0 6px 6px 0; background: #e9e7ee; }
  .play { position: absolute; left: 50%; top: 50%; display: grid; place-items: center; width: 72px; height: 72px; margin: -36px 0 0 -36px; border: 2px solid #5560f0; border-radius: 50%; background: #2430ea; }

  .trust { position: relative; margin: 138px 0 0; text-align: center; font-size: 19px; font-weight: 700; line-height: 24px; color: #ecebe9; }
  .partners { position: relative; display: flex; height: 80px; margin: 42px 0 12px 68px; overflow: hidden; }
  .partners > svg { width: 216px; height: 80px; }
  .next { height: 4px; border-bottom: 1px solid #000; }
</style>
